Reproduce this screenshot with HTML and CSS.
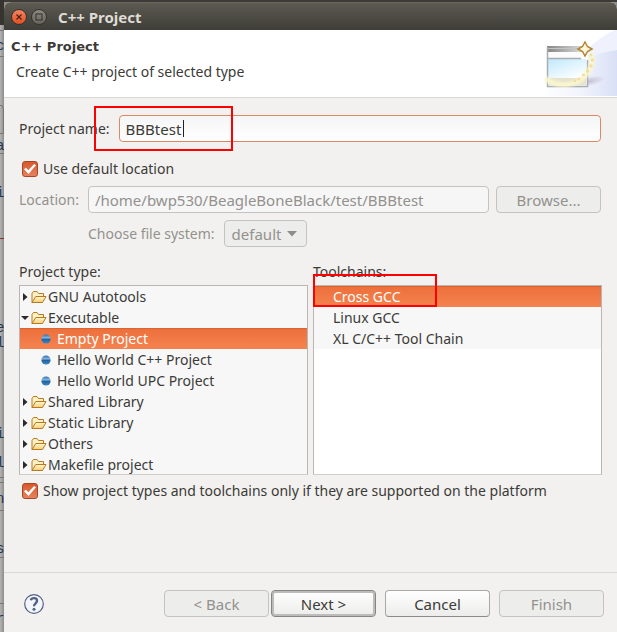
FILE: index.html
```html
<!DOCTYPE html>
<html lang="en">
<head>
<meta charset="utf-8">
<title>C++ Project</title>
<link rel="stylesheet" href="styles.css">
</head>
<body>
<svg width="0" height="0" class="defs" aria-hidden="true">
  <defs>
    <linearGradient id="fold" x1="0" y1="0" x2="0" y2="1"><stop offset="0" stop-color="#fff6d0"/><stop offset="1" stop-color="#f5cf74"/></linearGradient>
    <linearGradient id="ball" x1="0" y1="0" x2="0" y2="1"><stop offset="0" stop-color="#2b6fae"/><stop offset=".4" stop-color="#8fbbe0"/><stop offset=".5" stop-color="#1f5f9e"/><stop offset="1" stop-color="#3f8ac6"/></linearGradient>
    <symbol id="folder" viewBox="0 0 16 14">
      <path d="M1 12.5V3.5L2.5 1.5H6L7.5 3.5H12.5V6" fill="#fdf0c4" stroke="#b8781f"/>
      <path d="M1 12.5L4.8 6.5H15L11.5 12.5Z" fill="url(#fold)" stroke="#b8781f"/>
    </symbol>
    <symbol id="dot" viewBox="0 0 10 10"><circle cx="5" cy="5" r="4.6" fill="url(#ball)"/></symbol>
    <symbol id="closed" viewBox="0 0 8 8"><path d="M2 0L6.500 4L2 8Z" fill="#2c2b28"/></symbol>
    <symbol id="open" viewBox="0 0 8 8"><path d="M0 2H8L4 6Z" fill="#2c2b28"/></symbol>
  </defs>
</svg>
<div class="desktop">
  <svg class="behind" width="4" height="632" aria-hidden="true">
    <rect width="4" height="25" fill="#35342f"/>
    <path d="M0 30.5H4M0 56.5H4M0 105.5H2L3.5 109V133.500H0M0 153.500H4M0 477.500H4M0 482.500H4M0 510.500H4M0 557.500H4M0 603.500H4" stroke="#777" fill="none"/>
    <path d="M0 238.500H4" stroke="#8a3020"/>
    <g font-family="Liberation Mono" font-size="14" fill="#26364c">
      <text x="-4" y="50">c</text><text x="-4" y="150">a</text><text x="-4" y="197">i</text>
      <text x="-4" y="332">e</text><text x="-4" y="347">l</text><text x="-4" y="438">i</text>
      <text x="-4" y="467">l</text><text x="-4" y="503">n</text><text x="-4" y="553">s</text><text x="-4" y="623">r</text>
    </g>
  </svg>
  <main class="window">
    <header class="titlebar">
      <button class="round close" aria-label="Close"><svg width="8" height="8"><path d="M1.500 1.500L6.500 6.500M6.500 1.500L1.500 6.500" stroke="#4a2013" stroke-width="1.200"/></svg></button>
      <button class="round max" aria-label="Maximize"><svg width="8" height="8"><rect x="1" y="1" width="6" height="6" fill="none" stroke="#3c3b37" stroke-width="1.200"/></svg></button>
      <span class="title">C++ Project</span>
    </header>
    <section class="banner">
      <div class="intro">
        <h1>C++ Project</h1>
        <p>Create C++ project of selected type</p>
      </div>
      <svg class="art" width="77" height="67" viewBox="0 0 77 67" aria-hidden="true">
        <defs>
          <linearGradient id="sweep" x1="0" y1="0" x2="1" y2="0"><stop offset="0" stop-color="#fff"/><stop offset=".5" stop-color="#f3f5fd"/><stop offset="1" stop-color="#d9e0f6"/></linearGradient>
          <linearGradient id="sky" x1="0" y1="0" x2=".7" y2="1"><stop offset="0" stop-color="#bfe8fb"/><stop offset="1" stop-color="#fcfeff"/></linearGradient>
          <linearGradient id="cap" x1="0" y1="0" x2="1" y2="0"><stop offset="0" stop-color="#858585"/><stop offset="1" stop-color="#d8d8d8"/></linearGradient>
          <radialGradient id="shade"><stop offset="0" stop-color="#aaa3b8"/><stop offset="1" stop-color="#aaa3b8" stop-opacity="0"/></radialGradient>
          <filter id="glow" x="-20%" y="-20%" width="140%" height="140%"><feGaussianBlur stdDeviation="1.200"/></filter>
        </defs>
        <path d="M77 0C60 5 40 25 0 66H77Z" fill="url(#sweep)"/>
        <path d="M77 0C63 4 51 14 43 32C54 24 65 22 77 20Z" fill="#eff2fc"/>
        <ellipse cx="46" cy="52" rx="20" ry="5" fill="url(#shade)" transform="rotate(-12 46 52)" opacity=".7"/>
        <rect x="7" y="16" width="41" height="41" fill="#fbfbfb"/>
        <rect x="7" y="16" width="35" height="6" fill="url(#cap)"/>
        <path d="M7 18.500H42" stroke="#c4c4c4"/>
        <rect x="8" y="29" width="38" height="19" fill="url(#sky)"/>
        <rect x="9" y="48" width="37" height="7" fill="#e7e2cc"/>
        <path d="M7.500 17V56.500H47.500V30M8 28.500H41" fill="none" stroke="#a9adb0" stroke-width="1.500"/>
        <path d="M5 48C17 58 36 57 46 45C52 37 54 31 51 24" fill="none" stroke="#fbf8cf" stroke-width="5" opacity=".9" filter="url(#glow)"/>
        <g fill="#f3df9c">
          <circle cx="51" cy="25" r="1.500"/><circle cx="52.500" cy="30" r="1.700"/><circle cx="51" cy="36" r="1.700"/><circle cx="47.500" cy="41" r="1.700"/><circle cx="43.500" cy="45" r="1.600"/><circle cx="39" cy="49" r="1.500"/><circle cx="35" cy="51" r="1.300"/>
        </g>
        <path d="M45 12L47.500 16.500L52 19L47.500 21.500L45 26L42.500 21.500L38 19L42.500 16.500Z" fill="#fff8dc" stroke="#b18432" stroke-width="1.500"/>
      </svg>
    </section>
    <form class="form" onsubmit="return false">
      <div class="row">
        <label for="name">Project name:</label>
        <div class="marked grow">
          <input id="name" class="text active" type="text" value="BBBtest">
          <i class="caret"></i>
          <i class="mark mark-name"></i>
        </div>
      </div>
      <label class="check check-location"><input type="checkbox" checked><span>Use default location</span></label>
      <div class="row dim">
        <label for="loc">Location:</label>
        <input id="loc" class="text grow" type="text" value="/home/bwp530/BeagleBoneBlack/test/BBBtest" disabled>
        <button class="btn browse" type="button" disabled>Browse...</button>
      </div>
      <div class="row dim filesystem">
        <label for="fs">Choose file system:</label>
        <div class="drop">
          <select id="fs" disabled><option>default</option></select>
          <svg width="10" height="6" aria-hidden="true"><path d="M0 0H10L5 5.500Z" fill="#8f8d89"/></svg>
        </div>
      </div>
      <div class="lists">
        <section>
          <h2>Project type:</h2>
          <ul class="list">
            <li><svg class="tw"><use href="#closed"/></svg><svg class="fo"><use href="#folder"/></svg>GNU Autotools</li>
            <li><svg class="tw"><use href="#open"/></svg><svg class="fo"><use href="#folder"/></svg>Executable</li>
            <li class="leaf selected"><svg class="dot"><use href="#dot"/></svg>Empty Project</li>
            <li class="leaf"><svg class="dot"><use href="#dot"/></svg>Hello World C++ Project</li>
            <li class="leaf"><svg class="dot"><use href="#dot"/></svg>Hello World UPC Project</li>
            <li><svg class="tw"><use href="#closed"/></svg><svg class="fo"><use href="#folder"/></svg>Shared Library</li>
            <li><svg class="tw"><use href="#closed"/></svg><svg class="fo"><use href="#folder"/></svg>Static Library</li>
            <li><svg class="tw"><use href="#closed"/></svg><svg class="fo"><use href="#folder"/></svg>Others</li>
            <li><svg class="tw"><use href="#closed"/></svg><svg class="fo"><use href="#folder"/></svg>Makefile project</li>
          </ul>
        </section>
        <section class="marked">
          <h2>Toolchains:</h2>
          <ul class="list plain">
            <li class="selected">Cross GCC</li>
            <li>Linux GCC</li>
            <li>XL C/C++ Tool Chain</li>
          </ul>
          <i class="mark mark-tool"></i>
        </section>
      </div>
      <label class="check"><input type="checkbox" checked><span>Show project types and toolchains only if they are supported on the platform</span></label>
    </form>
    <footer class="footer">
      <button class="help" aria-label="Help"><svg width="20" height="20" viewBox="0 0 20 20"><circle cx="10" cy="10" r="9.300" fill="#f4f5f8" stroke="#506186" stroke-width="1.200"/><path d="M6.800 6.300C7.500 3.400 13 3.300 13 6.700C13 9.300 10 9.300 10 12.300" fill="none" stroke="#506186" stroke-width="2.400"/><circle cx="10" cy="15.300" r="1.500" fill="#506186"/></svg></button>
      <div class="pair">
        <button class="btn" type="button" disabled>&lt; Back</button>
        <button class="btn default" type="button">Next &gt;</button>
      </div>
      <button class="btn" type="button">Cancel</button>
      <button class="btn" type="button" disabled>Finish</button>
    </footer>
  </main>
</div>
</body>
</html>
```
FILE: styles.css
```css
* { box-sizing: border-box; }
body {
  margin: 0;
  background: #3c3b37;
  color: #3c3b37;
  font: 14px/20px "Noto Sans", "Open Sans", sans-serif;
}
button, input, select { font: inherit; color: inherit; margin: 0; }
h1, h2, p, ul { margin: 0; padding: 0; }
.defs { position: absolute; }

.desktop {
  position: relative;
  display: flex;
  min-height: 100vh;
  padding: 2px 0 0 4px;
  background: linear-gradient(#3c3b37 2px, transparent 2px), linear-gradient(90deg, #b4b4b4, #8d8d8d 4px);
}
.behind { position: absolute; left: 0; top: 0; }
.window {
  flex: 1;
  display: flex;
  flex-direction: column;
  min-width: 0;
  background: #f2f1ef;
  border-radius: 7px 7px 0 0;
  overflow: hidden;
}

.titlebar {
  display: flex;
  align-items: center;
  gap: 4px;
  height: 28px;
  padding: 0 7px;
  background: linear-gradient(#5c5a51, #3e3d38);
  border-top: 1px solid #6a685e;
  color: #dfdbd2;
}
.title { padding-left: 7px; font-size: 15px; font-weight: 700; }
.round {
  display: flex;
  align-items: center;
  justify-content: center;
  width: 16px;
  height: 16px;
  padding: 0;
  border: 1px solid #35342f;
  border-radius: 50%;
  background: linear-gradient(#8b8981, #66645d);
}
.close { background: linear-gradient(#f58461, #e0501f); }

.banner {
  display: flex;
  justify-content: space-between;
  height: 68px;
  background: #fff;
  border-bottom: 1px solid #d9d8d6;
}
.intro { padding: 7px; }
h1 { font: 700 13px/20px "DejaVu Sans", sans-serif; }
.intro p { padding: 5px; }

.form { padding: 17px 15px 0; }
.row { display: flex; align-items: center; gap: 9px; margin-right: 1px; }
.grow { flex: 1; min-width: 0; }
.dim { color: #93918d; }
.text {
  width: 100%;
  height: 27px;
  padding: 0 6px;
  border: 1px solid #c4c3c1;
  border-radius: 4px;
  background: #f6f6f6;
  font-size: 15px;
}
.text.active {
  display: block;
  border-color: #dd8864;
  background: linear-gradient(#f5f5f5, #fff);
  outline: 0;
}
.marked { position: relative; }
.caret { position: absolute; left: 64px; top: 5px; width: 1px; height: 17px; background: #222; }
.mark { position: absolute; border: 2px solid #f00; pointer-events: none; }
.mark-name { left: -25px; top: -9px; width: 139px; height: 45px; }
.mark-tool { left: 0; top: 12px; width: 124px; height: 33px; }

.check { display: flex; align-items: center; gap: 5px; padding-left: 3px; }
.check-location { margin: 17px 0 7px; }
.check input {
  appearance: none;
  width: 16px;
  height: 16px;
  border: 1px solid #a44825;
  border-radius: 3px;
  background: linear-gradient(#d9572b, #e5835f);
  display: grid;
  place-items: center;
}
.check input::after {
  content: "";
  width: 12px;
  height: 11px;
  background: #fff;
  clip-path: polygon(0 52%, 16% 38%, 36% 62%, 84% 4%, 100% 16%, 38% 96%);
}

.btn {
  min-width: 105px;
  height: 27px;
  padding: 0 8px;
  border: 1px solid #a9a8a6;
  border-bottom-color: #8c8b89;
  border-radius: 4px;
  background: linear-gradient(#fff, #ececeb);
  font-size: 15px;
}
.btn:disabled { color: #93918d; border-color: #c4c3c1; background: #ededec; }
.btn.default { border-color: #868583; box-shadow: inset 0 0 0 2px #bdbcba; }
.browse { margin-left: -2px; }

.filesystem { margin-top: 7px; padding-left: 69px; }
.drop { position: relative; }
.drop select {
  display: block;
  appearance: none;
  width: 83px;
  height: 27px;
  padding: 0 7px;
  border: 1px solid #c4c3c1;
  border-radius: 4px;
  background: #ededec;
  font-size: 15px;
  opacity: 1;
}
.drop svg { position: absolute; right: 10px; top: 11px; }

.lists { display: grid; grid-template-columns: 1fr 1fr; gap: 5px; margin: 15px 0 6px; }
h2 { font-size: inherit; font-weight: 400; line-height: 20px; padding-bottom: 3px; }
.list {
  height: 190px;
  border: 1px solid #b9b7b4;
  border-bottom-color: #d0cecb;
  background: #fff;
  list-style: none;
  overflow: hidden;
}
.list li { display: flex; align-items: center; height: 21px; padding-left: 1px; background: #f7f7f7; }
.list .leaf { padding-left: 21px; }
.list.plain li { padding-left: 19px; }
.list .selected { background: linear-gradient(#dd6330 1px, #ec703c 1px, #f5834f); color: #fff; }
.tw { width: 8px; height: 8px; margin-right: 2px; }
.fo { width: 16px; height: 14px; margin-right: 1px; }
.dot { width: 10px; height: 10px; margin-right: 6px; }

.footer {
  display: flex;
  align-items: center;
  gap: 9px;
  height: 60px;
  margin-top: auto;
  padding: 2px 13px 0 20px;
  border-top: 1px solid #d9d8d6;
}
.help { margin-right: auto; padding: 0; border: 0; background: none; height: 20px; }
.pair { display: flex; gap: 2px; }
```
